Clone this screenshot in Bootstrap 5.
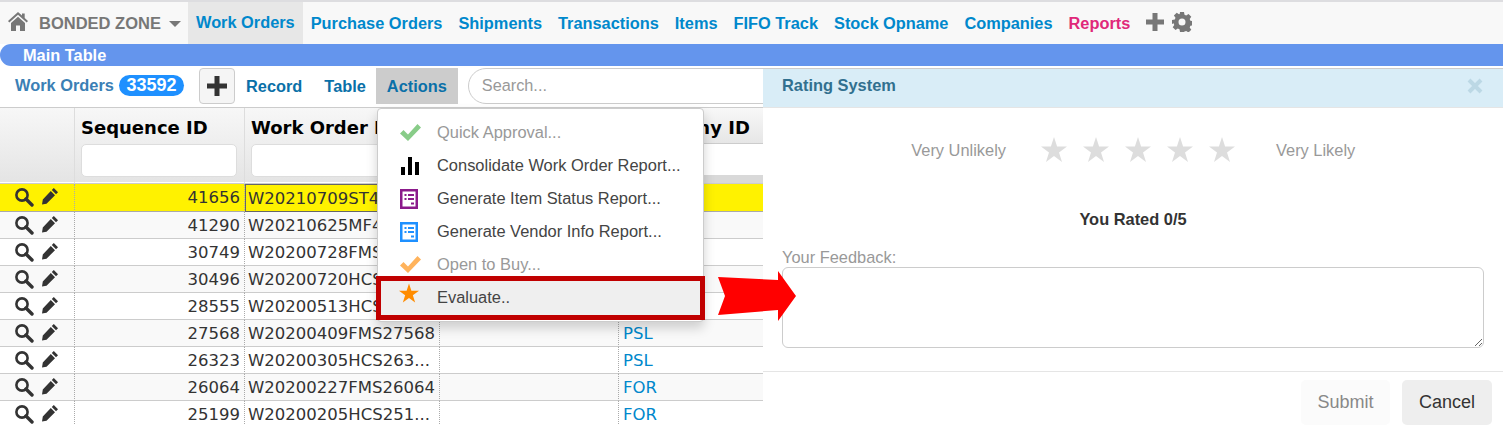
<!DOCTYPE html>
<html lang="en">
<head>
  <meta charset="UTF-8">
  <title>Work Orders</title>
  <link href="https://cdn.jsdelivr.net/npm/bootstrap@5.3.0/dist/css/bootstrap.min.css" rel="stylesheet">
  <style>
    html, body { height: 425px; overflow: hidden; }
    body { font-family: "Liberation Sans", Arial, sans-serif; font-size: 16.35px; color: #333; background: #fff; position: relative; }
    .top-nav { height: 44px; background: #f8f8f8; border-top: 2px solid #dddde0; padding: 0; flex-wrap: nowrap; justify-content: flex-start; }
    .top-nav .brand-box { display: flex; align-items: center; padding-left: 8px; width: 188px; color: #777; font-weight: 700; font-size: 16.5px; }
    .top-nav .brand-box svg { margin-top: -4px; }
    .top-nav .brand-box .brand-text { margin-left: 11px; }
    .caret-down { width: 0; height: 0; border: 6px solid transparent; border-top: 6px solid #777; border-bottom: 0; margin-left: 8px; margin-top: 2px; }
    .top-link { display: block; height: 42px; line-height: 43px; padding: 0 8px; font-weight: 700; color: #0088cc; text-decoration: none; white-space: nowrap; }
    .top-link.current { background: #e7e7e7; line-height: 41px; }
    .top-link.pink { color: #e0287a; }
    .top-tool { margin-top: -2px; }
    .main-bar { height: 22px; background: #6495ed; color: #fff; font-weight: 700; line-height: 21px; padding: 1px 0 0 23px; border-radius: 11px 0 0 11px; }
    .tool-row { height: 42px; padding: 2px 0 0 15px; border-bottom: 1px solid #ccc; }
    .tool-title { color: #3b7fb5; font-weight: 700; margin-top: 1px; font-size: 16.4px; }
    .count-pill { background: #1e90ff; color: #fff; font-weight: 700; font-size: 18px; line-height: 21px; height: 21px; padding: 0 7.500px; border-radius: 11px; margin: 7px 0 0 5px; }
    .add-btn { width: 36px; height: 36px; padding: 0; margin-left: 15px; background: #f5f5f5; border: 1px solid #ccc; border-radius: 4px; display: flex; align-items: center; justify-content: center; }
    .tool-link { height: 36px; line-height: 36px; font-weight: 700; color: #0a70a8; text-decoration: none; padding: 0 11px; }
    .tool-link.on { background: #ccc; margin-left: -1px; }
    .search-box { flex: 1; height: 36px; margin-left: 10px; border-radius: 18px; border: 1px solid #ccc; font-size: 16.3px; padding: 0 13px 2px; box-shadow: none; }
    .search-box::placeholder { color: #999; }

    .grid-wrap { width: 1100px; font-family: "DejaVu Sans", Verdana, sans-serif; }
    .data-grid { table-layout: fixed; width: 1100px; margin: 0; border-collapse: separate; border-spacing: 0; color: #333; }
    .data-grid th { height: 36px; padding: 3px 6px 0; font-size: 18px; font-weight: 700; color: #000; vertical-align: middle; white-space: nowrap; overflow: hidden; background: linear-gradient(#f7f7f7, #eeeeee); border-right: 1px solid #ddd; border-bottom: 0; }
    .data-grid th.last-head { padding-left: 9px; background: linear-gradient(#f8f8f8, #e6e6e6); border-bottom: 1px solid #ccc; }
    .data-grid td.filter-cell { height: 39px; padding: 0 7px 6px 6px; background: linear-gradient(#eeeeee, #e4e4e4); border-right: 1px solid #ddd; border-bottom: 1px solid #ccc; box-shadow: inset 0 -1px 0 #fff; vertical-align: top; }
    .data-grid td.filter-cell.last-filter { background: #fff; box-shadow: inset 0 -8px 0 #d9d9d9; }
    .filter-input { display: block; width: 100%; height: 33px; background: #fff; border: 1px solid #ddd; border-radius: 5px; }
    .data-grid tbody td { height: 27px; padding: 2px 3px 0; font-size: 16.5px; line-height: 24px; border-bottom: 1px solid #ccc; border-right: 1px dotted #aaa; white-space: nowrap; overflow: hidden; background: #fff; box-shadow: none; }
    .data-grid tbody tr:nth-child(even) td { background: #f9f9f9; }
    .data-grid tbody tr.hilite td { background: #fff200; border-bottom-color: #aaa; }
    .data-grid tbody tr.hilite td.picked { border: 1px solid #666; padding-left: 2px; }
    .data-grid td.num { text-align: right; padding-right: 4px; }
    .data-grid tbody td.acts { padding: 3px 0 0 14px; line-height: 20px; }
    .data-grid tbody td.code { padding-left: 4px; }
    .data-grid td a { color: #0088cc; text-decoration: none; }
    .row-icon { display: inline-block; vertical-align: top; color: #333; }
    .row-icon + .row-icon { margin-left: 7px; }

    .act-menu { display: block; position: absolute; left: 377px; top: 108px; width: 327px; height: 214px; padding: 7px 0 0; margin: 0; border: 1px solid #ccc; border-radius: 4px; box-shadow: 0 6px 12px rgba(0,0,0,.175); font-size: 16.45px; z-index: 5; }
    .act-menu .dropdown-item { display: flex; align-items: center; height: 33px; padding: 0 0 0 22px; color: #444; }
    .act-menu .dropdown-item.dim { color: #999; }
    .act-menu .dropdown-item .ico { width: 37px; flex: none; display: flex; }
    .act-menu .dropdown-item.picked-item { background: #efefef; outline: 5px solid #c00000; outline-offset: -5px; height: 44px; margin: -5px -2px 0 -2px; width: calc(100% + 4px); padding: 0 0 2px 24px; }
    .picked-item .ico svg { margin: -9px 0 0 -1px; }
    .big-arrow { position: absolute; left: 718px; top: 271px; z-index: 6; }

    .rate-panel { position: absolute; left: 763px; top: 68px; width: 740px; height: 357px; background: #fff; border: 0; border-top: 1px solid #ccc; border-radius: 0; z-index: 4; display: block; }
    .rate-panel .modal-header { height: 39px; padding: 0 20px 5px 19px; background: #d9edf7; border-bottom: 1px solid #e5e5e5; border-radius: 0; }
    .rate-title { color: #31708f; font-weight: 700; font-size: 16.4px; }
    .rate-panel .modal-body { padding: 0 19px; height: 263px; font-size: 16.4px; }
    .rate-line { padding-top: 29px; height: 83px; color: #999; }
    .rate-line .lbl-left { width: 224px; text-align: right; line-height: 26px; }
    .rate-line .star-set { display: flex; gap: 16px; margin-left: 35px; width: 194px; }
    .rate-line .lbl-right { margin-left: 41px; line-height: 26px; }
    .rate-score { text-align: center; font-weight: 700; color: #333; height: 45px; padding-top: 18px; line-height: 20px; }
    .fb-label { color: #999; line-height: 18px; margin: 12px 0 1px; display: block; }
    .fb-area { height: 81px; border: 1px solid #ccc; border-radius: 6px; box-shadow: none; }
    .rate-panel .modal-footer { padding: 8px 11px 0 0; border-top: 1px solid #e5e5e5; border-radius: 0; flex-wrap: nowrap; gap: 12px; justify-content: flex-end; }
    .rate-panel .modal-footer .btn { margin: 0; width: 90px; height: 45px; font-size: 18px; border: 0; border-radius: 5px; padding: 0; }
    .rate-panel .modal-footer .btn-send, .btn-send:disabled { width: 89px; background: #fbfbfb; color: #888; opacity: 1; }
    .btn-quit { background: #eee; color: #333; }
  </style>
</head>
<body>
  <svg width="0" height="0" class="d-none">
    <symbol id="i-search" viewBox="0 0 20 20"><circle cx="8" cy="8" r="5.600" fill="none" stroke="currentColor" stroke-width="2.600"/><path d="M12 12l6 6" stroke="currentColor" stroke-width="3.400" stroke-linecap="round"/></symbol>
    <symbol id="i-pencil" viewBox="0 0 18 18"><path d="M12.800 1l4.200 4.200-2 2L10.800 3zM9.800 4l4.200 4.200L5.500 16.700 1 17.500l.8-5z" fill="currentColor"/></symbol>
    <symbol id="i-sheet" viewBox="0 0 18 20"><path fill-rule="evenodd" d="M0 0h18v20H0zM2.500 2.500v15h13v-15z" fill="currentColor"/><path d="M4.500 5h2v2h-2zM8 5h6v2H8zM4.500 9h2v2h-2zM8 9h6v2H8zM11 13.500h3v2h-3z" fill="currentColor"/></symbol>
    <symbol id="i-check" viewBox="0 0 21 17"><path d="M0 9.500l3.500-3.500 4.500 4.500L17.500 0 21 3.500 8 17z" fill="currentColor"/></symbol>
    <symbol id="i-star" viewBox="0 0 26 25"><path d="M13 0l3.100 9.500H26l-8 5.900 3 9.600-8-5.900L5 25l3-9.600-8-5.900h9.900z" fill="currentColor"/></symbol>
  </svg>

  <nav class="navbar top-nav">
    <div class="brand-box">
      <svg width="20" height="19" viewBox="0 0 20 19"><path d="M10 0l4 3.600V1.500h2.700V6L20 9l-1.300 1.500L10 2.800 1.300 10.500 0 9zM3 11l7-6.200L17 11v8h-5v-5.500H8V19H3z" fill="#777"/></svg>
      <span class="brand-text">BONDED ZONE</span>
      <span class="caret-down"></span>
    </div>
    <a class="top-link current" href="#">Work Orders</a>
    <a class="top-link" href="#">Purchase Orders</a>
    <a class="top-link" href="#">Shipments</a>
    <a class="top-link" href="#">Transactions</a>
    <a class="top-link" href="#">Items</a>
    <a class="top-link" href="#">FIFO Track</a>
    <a class="top-link" href="#">Stock Opname</a>
    <a class="top-link" href="#">Companies</a>
    <a class="top-link pink" href="#">Reports</a>
    <svg class="ms-2 top-tool" width="18" height="18" viewBox="0 0 18 18"><path d="M6.500 0h5v6.500H18v5h-6.500V18h-5v-6.500H0v-5h6.500z" fill="#777"/></svg>
    <svg class="ms-2 top-tool" width="20" height="20" viewBox="0 0 20 20"><path fill-rule="evenodd" d="M8 0h4l.5 2.800 1.700.7 2.300-1.600 2.800 2.800-1.600 2.300.7 1.700 2.800.5v4l-2.800.5-.7 1.700 1.600 2.300-2.800 2.800-2.300-1.600-1.700.7L12 20H8l-.5-2.800-1.700-.7-2.300 1.600L.7 15.300l1.600-2.300-.7-1.700L0 12V8l2.800-.5.7-1.700L1.900 3.500 4.700.7 7 2.300l.7-.3zM10 6.500a3.500 3.500 0 100 7 3.500 3.500 0 000-7z" fill="#777"/></svg>
  </nav>
  <div class="main-bar">Main Table</div>

  <div class="tool-row d-flex align-items-start">
    <span class="tool-title lh-lg">Work Orders</span>
    <span class="count-pill">33592</span>
    <button class="add-btn" type="button"><svg width="22" height="22" viewBox="0 0 22 22"><path d="M8.500 1h5v7.500H21v5h-7.500V21h-5v-7.500H1v-5h7.500z" fill="#333"/></svg></button>
    <a class="tool-link" href="#">Record</a>
    <a class="tool-link" href="#">Table</a>
    <a class="tool-link on" href="#">Actions</a>
    <input class="form-control search-box" type="text" placeholder="Search...">
  </div>

  <div class="grid-wrap">
    <table class="table data-grid">
      <colgroup><col style="width:75px"><col style="width:170px"><col style="width:195px"><col style="width:179px"><col style="width:481px"></colgroup>
      <thead>
        <tr>
          <th></th>
          <th>Sequence ID</th>
          <th>Work Order ID</th>
          <th></th>
          <th class="last-head">Company ID</th>
        </tr>
        <tr>
          <td class="filter-cell"></td>
          <td class="filter-cell"><span class="filter-input"></span></td>
          <td class="filter-cell"><span class="filter-input"></span></td>
          <td class="filter-cell"></td>
          <td class="filter-cell last-filter"></td>
        </tr>
      </thead>
      <tbody id="rows"></tbody>
    </table>
  </div>

  <ul class="dropdown-menu act-menu">
    <li><a class="dropdown-item dim" href="#"><span class="ico"><svg width="21" height="17" style="color:#88cc88"><use href="#i-check"/></svg></span>Quick Approval...</a></li>
    <li><a class="dropdown-item" href="#"><span class="ico"><svg width="20" height="18" viewBox="0 0 20 18"><path d="M1 10h4v8H1zM8 0h4v18H8zM15 5h4v13h-4z" fill="#000"/></svg></span>Consolidate Work Order Report...</a></li>
    <li><a class="dropdown-item" href="#"><span class="ico"><svg width="18" height="20" style="color:#8b1a8b"><use href="#i-sheet"/></svg></span>Generate Item Status Report...</a></li>
    <li><a class="dropdown-item" href="#"><span class="ico"><svg width="18" height="20" style="color:#1e90ff"><use href="#i-sheet"/></svg></span>Generate Vendor Info Report...</a></li>
    <li><a class="dropdown-item dim" href="#"><span class="ico"><svg width="21" height="17" style="color:#ffb35c"><use href="#i-check"/></svg></span>Open to Buy...</a></li>
    <li><a class="dropdown-item picked-item" href="#"><span class="ico"><svg width="20" height="20" style="color:#ff8c00"><use href="#i-star"/></svg></span>Evaluate..</a></li>
  </ul>

  <svg class="big-arrow" width="78" height="50" viewBox="0 0 78 50"><path d="M0 6l60 3V0l18 25-18 25V39l-60 5 7-19z" fill="#f00"/></svg>

  <div class="modal-content rate-panel">
    <div class="modal-header">
      <span class="rate-title">Rating System</span>
      <svg class="ms-auto" width="16" height="16" viewBox="0 0 16 16"><path d="M2 2l12 12M14 2L2 14" stroke="#bcd8e5" stroke-width="4"/></svg>
    </div>
    <div class="modal-body">
      <div class="rate-line d-flex">
        <span class="lbl-left">Very Unlikely</span>
        <span class="star-set" id="stars"></span>
        <span class="lbl-right">Very Likely</span>
      </div>
      <div class="rate-score">You Rated 0/5</div>
      <label class="fb-label">Your Feedback:</label>
      <textarea class="form-control fb-area"></textarea>
    </div>
    <div class="modal-footer">
      <button class="btn btn-send" type="button" disabled>Submit</button>
      <button class="btn btn-quit" type="button">Cancel</button>
    </div>
  </div>

  <script>
    // the first rows have their company behind the menu
    const filas = [
      ['41656', 'W20210709ST41656', ''],
      ['41290', 'W20210625MF41290', ''],
      ['30749', 'W20200728FMS30749', ''],
      ['30496', 'W20200720HCS30496', ''],
      ['28555', 'W20200513HCS28555', ''],
      ['27568', 'W20200409FMS27568', 'PSL'],
      ['26323', 'W20200305HCS263...', 'PSL'],
      ['26064', 'W20200227FMS26064', 'FOR'],
      ['25199', 'W20200205HCS251...', 'FOR']
    ];
    const cuerpo = document.getElementById('rows');
    filas.forEach((f, i) => {
      const tr = cuerpo.insertRow();
      if (i === 0) tr.className = 'hilite';
      tr.innerHTML = `
        <td class="acts"><svg class="row-icon" width="20" height="20"><use href="#i-search"/></svg><svg class="row-icon" width="18" height="18"><use href="#i-pencil"/></svg></td>
        <td class="num">${f[0]}</td>
        <td class="${i === 0 ? 'picked' : ''}">${f[1]}</td>
        <td></td>
        <td class="code"><a href="#">${f[2]}</a></td>`;
    });
    const estrellas = document.getElementById('stars');
    for (let i = 0; i < 5; i++) {
      estrellas.innerHTML += '<svg width="26" height="25" style="color:#ddd"><use href="#i-star"/></svg>';
    }
  </script>
  <script src="https://cdn.jsdelivr.net/npm/bootstrap@5.3.0/dist/js/bootstrap.bundle.min.js"></script>
</body>
</html>
